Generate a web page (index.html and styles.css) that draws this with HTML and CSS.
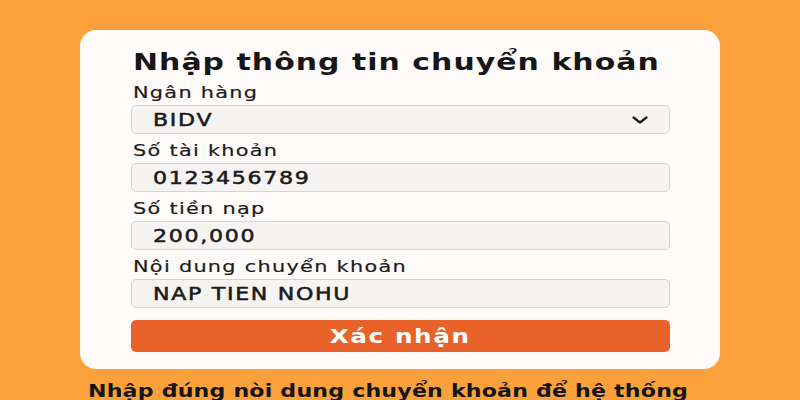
FILE: index.html
```html
<!DOCTYPE html>
<html lang="vi">
<head>
<meta charset="utf-8">
<title>Nhập thông tin chuyển khoản</title>
<link rel="stylesheet" href="styles.css">
</head>
<body>
<div class="page">
  <form class="card">
    <h1 class="title"><span class="wide">Nhập thông tin chuyển khoản</span></h1>
    <div class="field">
      <label class="label"><span class="wide">Ngân hàng</span></label>
      <div class="input select">
        <span class="value wide">BIDV</span>
        <svg class="chevron" width="18" height="10" viewBox="0 0 18 10"><polyline points="2.5,2.5 9,7.5 15.5,2.5" fill="none" stroke="#1b1b1b" stroke-width="2.3" stroke-linecap="round" stroke-linejoin="round"/></svg>
      </div>
    </div>
    <div class="field">
      <label class="label"><span class="wide">Số tài khoản</span></label>
      <div class="input"><span class="value wide">0123456789</span></div>
    </div>
    <div class="field">
      <label class="label"><span class="wide">Số tiền nạp</span></label>
      <div class="input"><span class="value wide">200,000</span></div>
    </div>
    <div class="field">
      <label class="label"><span class="wide">Nội dung chuyển khoản</span></label>
      <div class="input"><span class="value wide">NAP TIEN NOHU</span></div>
    </div>
    <button type="button" class="submit"><span class="wide center">Xác nhận</span></button>
  </form>
  <p class="note"><span class="wide">Nhập đúng nòi dung chuyển khoản để hệ thống</span></p>
</div>
</body>
</html>
```
FILE: styles.css
```css
html, body {
  margin: 0;
  padding: 0;
}
body {
  width: 800px;
  height: 400px;
  overflow: hidden;
  background: #fba13b;
  font-family: "DejaVu Sans", "Liberation Sans", sans-serif;
  color: #1b1b1b;
}
.wide {
  display: inline-block;
  transform: scaleX(1.3);
  transform-origin: 0 50%;
  white-space: nowrap;
}
.wide.center {
  transform-origin: 50% 50%;
}
.page {
  padding-top: 30px;
  display: flex;
  flex-direction: column;
  align-items: flex-start;
}
.card {
  margin-left: 80px;
  width: 640px;
  height: 339px;
  box-sizing: border-box;
  background: #fefbfa;
  border-radius: 16px;
  padding: 19px 50px 0 51px;
  display: flex;
  flex-direction: column;
}
.title {
  margin: 0 0 0 2px;
  font-size: 23px;
  line-height: 27px;
  font-weight: bold;
  letter-spacing: 0.8px;
  color: #161616;
}
.field {
  display: flex;
  flex-direction: column;
  gap: 2px;
  margin-top: 7px;
}
.label {
  margin-left: 2px;
  font-size: 16px;
  line-height: 20px;
  letter-spacing: 1px;
  -webkit-text-stroke: 0.2px #1b1b1b;
}
.input {
  height: 29px;
  box-sizing: border-box;
  border: 1px solid #d6d4d3;
  border-radius: 5px;
  background: #f6f4f3;
  display: flex;
  align-items: center;
  padding: 0 20px 0 21px;
}
.select {
  justify-content: space-between;
}
.value {
  font-size: 17px;
  line-height: 20px;
  letter-spacing: 1.3px;
  -webkit-text-stroke: 0.5px #1b1b1b;
}
.chevron {
  display: block;
}
.submit {
  margin-top: 12px;
  height: 32px;
  border: none;
  border-radius: 5px;
  background: #e9622a;
  color: #ffffff;
  font-family: inherit;
  font-size: 19px;
  font-weight: bold;
  letter-spacing: 1.2px;
  padding: 0;
}
.note {
  margin: 12px 0 0 88px;
  font-size: 17px;
  line-height: 20px;
  font-weight: bold;
  letter-spacing: 0.15px;
  color: #141414;
}
```
